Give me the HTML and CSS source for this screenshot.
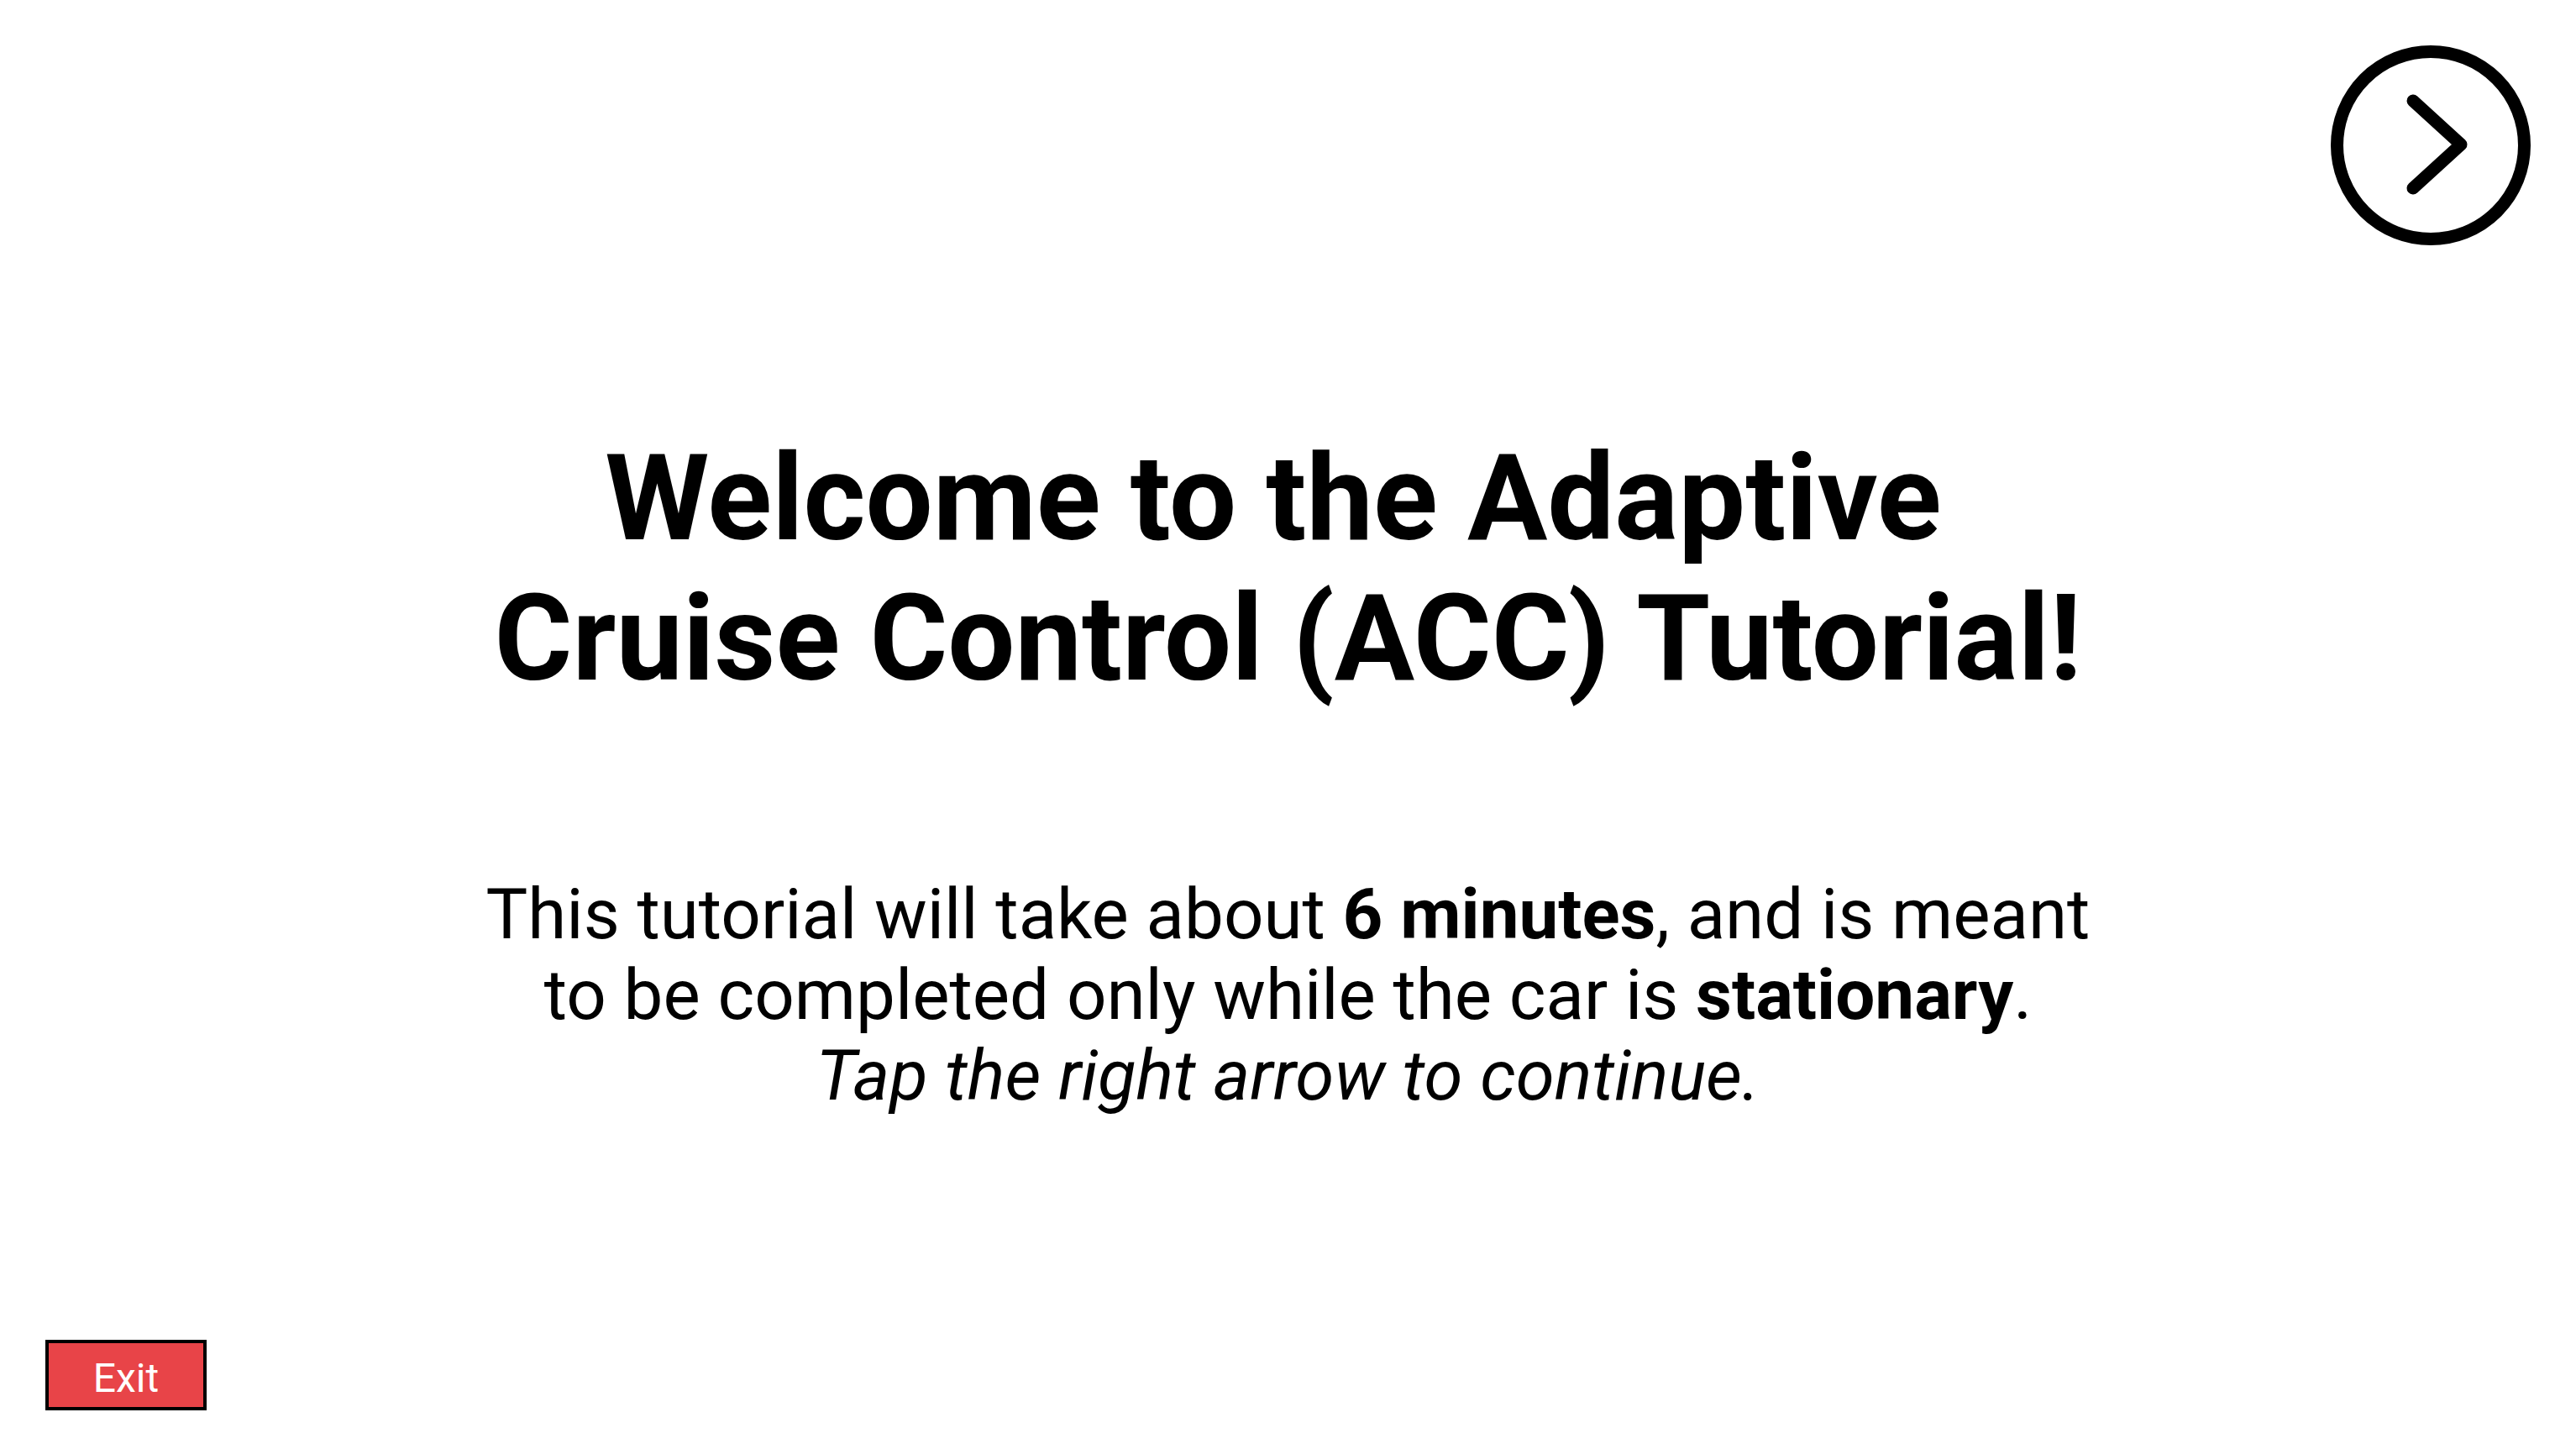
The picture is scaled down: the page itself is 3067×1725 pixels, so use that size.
FILE: index.html
```html
<!DOCTYPE html>
<html lang="en">
<head>
<meta charset="utf-8">
<title>ACC Tutorial</title>
<link rel="stylesheet" href="styles.css">
</head>
<body>
<div class="page">
  <header class="topbar">
    <button class="next-btn" aria-label="Next">
      <svg width="238" height="238" viewBox="0 0 238 238">
        <circle cx="119" cy="119" r="111.5" fill="none" stroke="#000" stroke-width="15"/>
        <polyline points="98,66 155,118 98,170" fill="none" stroke="#000" stroke-width="15" stroke-linecap="round" stroke-linejoin="round"/>
      </svg>
    </button>
  </header>
  <main class="content">
    <h1 class="title">Welcome to the Adaptive&nbsp;<br>Cruise Control (ACC) Tutorial!</h1>
    <p class="intro">This tutorial will take about <b>6 minutes</b>, and is meant<br>to be completed only while the car is <b>stationary</b>.<br><i>Tap the right arrow to continue.</i></p>
  </main>
  <footer class="footer">
    <button class="exit-btn">Exit</button>
  </footer>
</div>
</body>
</html>
```

FILE: styles.css
```css
html, body {
  margin: 0;
  padding: 0;
  background: #fff;
}
.page {
  width: 3067px;
  height: 1725px;
  display: flex;
  flex-direction: column;
  font-family: Roboto, "Liberation Sans", sans-serif;
  color: #000;
}
.topbar {
  display: flex;
  justify-content: flex-end;
  padding: 54px 54px 0 0;
}
.next-btn {
  border: 0;
  background: none;
  padding: 0;
  margin: 0;
  width: 238px;
  height: 238px;
  display: block;
}
.next-btn svg {
  display: block;
}
.content {
  flex: 1;
  display: flex;
  flex-direction: column;
  align-items: center;
  padding-top: 218px;
  text-align: center;
}
.title {
  margin: 0;
  font-size: 142px;
  font-weight: 700;
  line-height: normal;
}
.intro {
  margin: 197px 0 0 0;
  font-size: 83.5px;
  font-weight: 400;
  line-height: 96px;
}
.intro b {
  font-weight: 700;
}
.footer {
  display: flex;
  padding: 0 0 46px 54px;
}
.exit-btn {
  width: 192px;
  height: 84px;
  box-sizing: border-box;
  border: 4px solid #000;
  background: #e84448;
  color: #fff;
  font-family: Roboto, "Liberation Sans", sans-serif;
  font-size: 48px;
  font-weight: 400;
  padding: 7px 0 0 0;
  margin: 0;
  display: flex;
  align-items: center;
  justify-content: center;
  line-height: 1;
}
```
